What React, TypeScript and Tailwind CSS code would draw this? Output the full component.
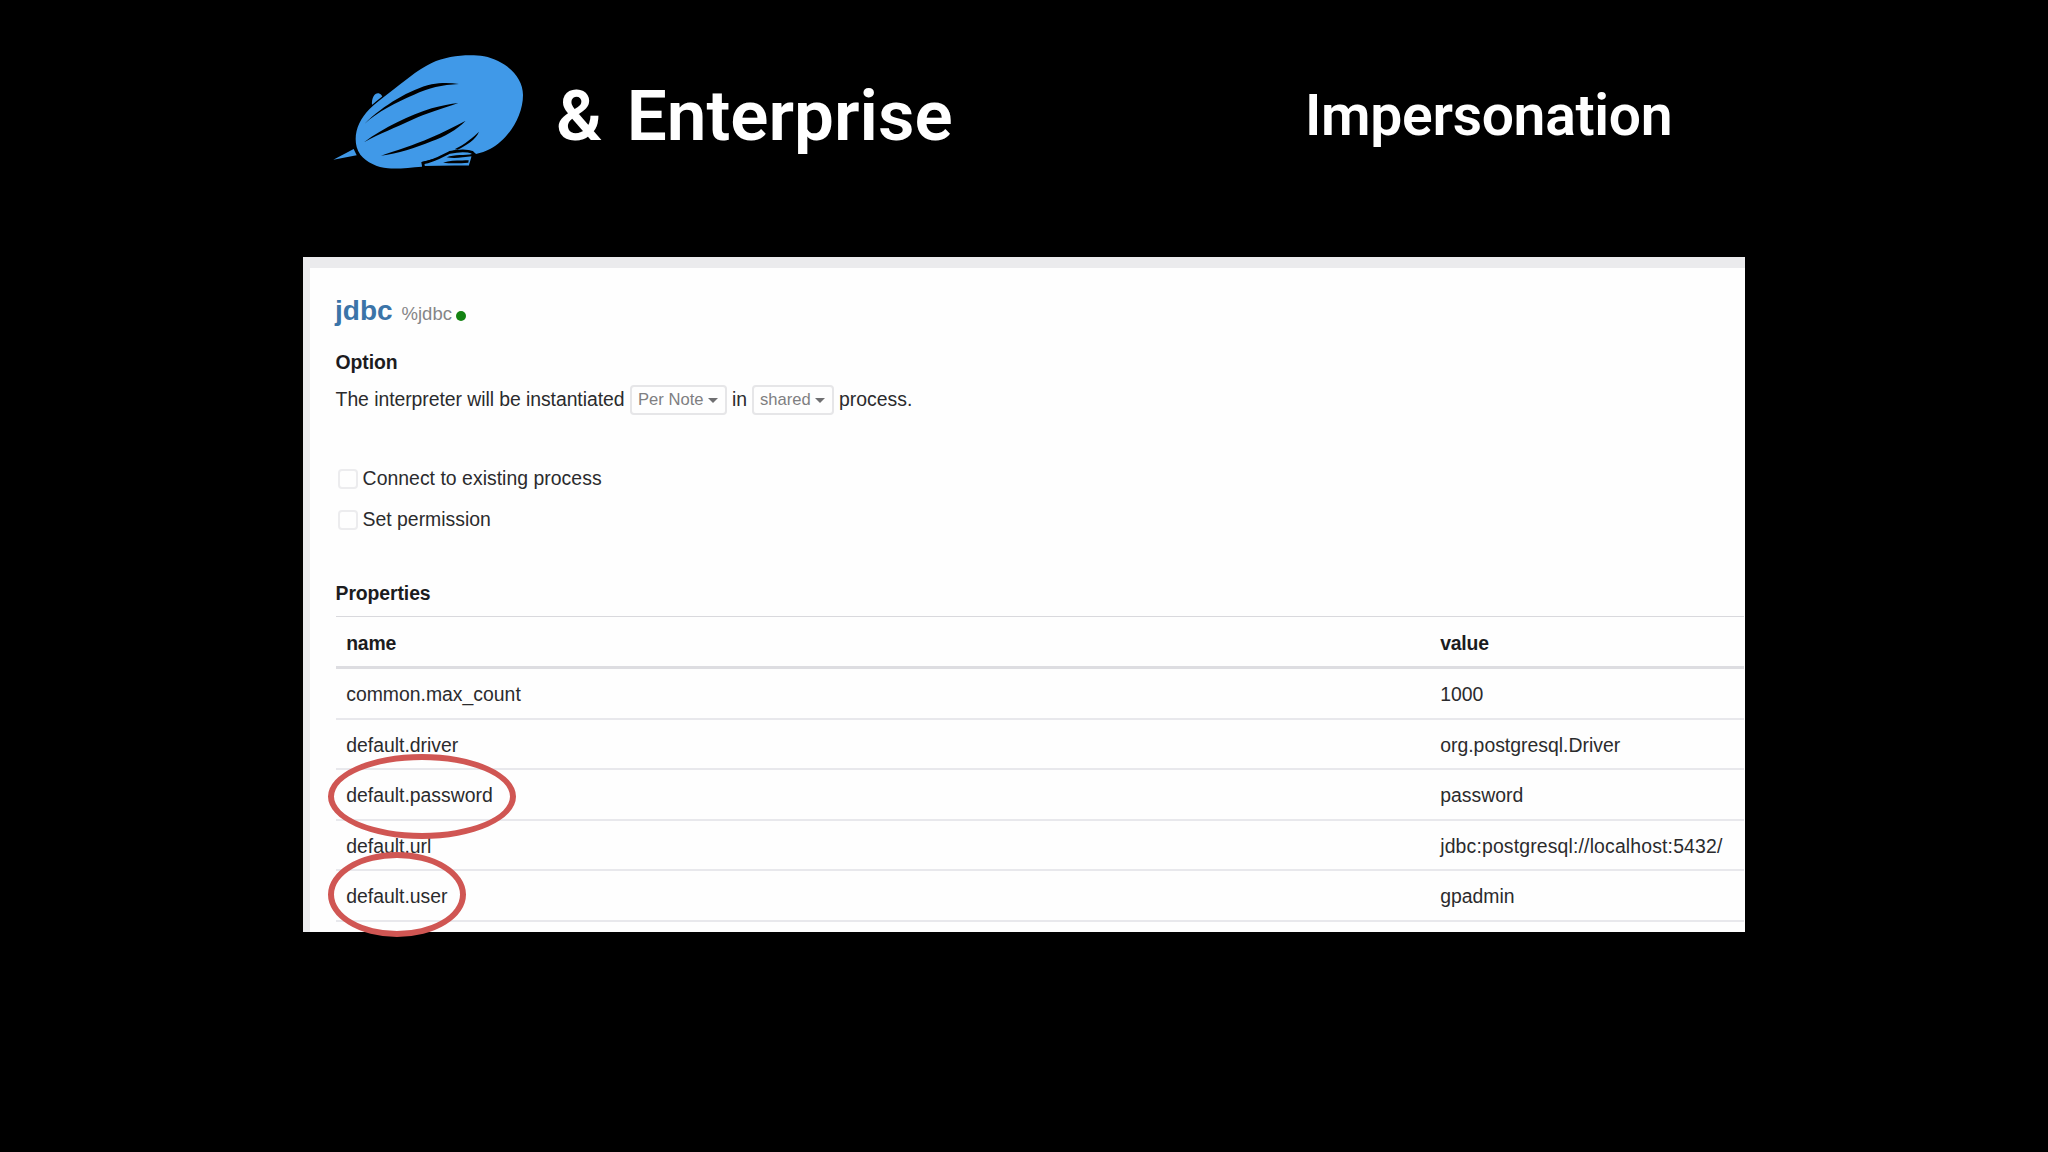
import React from 'react';
import { clsx } from 'clsx';

interface Property {
  name: string;
  value: string;
  wide?: boolean;
}

const PROPERTIES: Property[] = [
  { name: 'common.max_count', value: '1000' },
  { name: 'default.driver', value: 'org.postgresql.Driver' },
  { name: 'default.password', value: 'password' },
  { name: 'default.url', value: 'jdbc:postgresql://localhost:5432/', wide: true },
  { name: 'default.user', value: 'gpadmin' },
];

const ZeppelinLogo: React.FC = () => (
  <svg viewBox="0 0 660 420" className="w-[220px] h-[140px] shrink-0">
    {/* tail fins */}
    <path d="M156 196C154 172 165 158 176 160C183 162 187 168 188 174C176 180 167 188 156 196Z" fill="#4099e8" />
    <path d="M40 359L101 327L110 346Z" fill="#4099e8" />
    {/* hull */}
    <path
      d="M107 297C107 265 123 233 148 208C165 191 187 174 206 160C251 126 289 91 335 69C382 47 446 42 492 49C555 62 609 108 609 165C609 230 563 300 510 327C498 334 482 339 468 342C460 331 437 328 404 331C387 334 372 346 355 353L305 366L306 380C270 382 235 388 204 385C172 382 140 367 121 344C111 330 107 314 107 297Z"
      fill="#4099e8"
      stroke="#000"
      strokeWidth="8"
      paintOrder="stroke"
    />
    {/* stripes */}
    <path d="M134 251C190 196 270 148 335 133C364 127 392 128 417 132C365 134 327 144 282 164C226 188 174 214 134 251Z" />
    <path d="M132 307C190 263 272 225 335 205C365 197 391 191 415 189C363 208 319 219 275 240C226 263 181 280 132 307Z" />
    <path d="M183 347C226 332 286 314 330 294C371 277 405 258 437 242C409 271 374 289 335 304C285 324 234 342 183 347Z" />
    <path d="M404 328C435 312 461 291 477 275C467 299 441 315 413 329Z" />
    {/* gondola */}
    <path d="M309 369C342 364 365 349 389 337C413 332 439 330 457 337C463 349 453 362 450 380L311 382Z" fill="#4099e8" stroke="#000" strokeWidth="8" />
    <path d="M303 382H462V396H303Z" />
    <path d="M380 352C404 342 434 347 458 342L456 349C430 352 404 357 380 352Z" />
    <path d="M369 368C393 359 420 362 446 361L445 368C420 370 392 371 369 368Z" />
  </svg>
);

const Dropdown: React.FC<{ label: string; className: string }> = ({ label, className }) => (
  <button
    className={clsx(
      'flex items-center justify-between h-[30px] pl-[6px] pr-[7px] rounded-[4px] border-2 border-[#e6e6e8] text-[16.6px] text-[#7f7f81]',
      className
    )}
  >
    {label}
    <svg viewBox="0 0 10 5" className="w-[10px] h-[5px] fill-[#6f6f71]">
      <path d="M0 0H10L5 5Z" />
    </svg>
  </button>
);

const CheckOption: React.FC<{ label: string; className?: string }> = ({ label, className }) => (
  <label className={clsx('flex items-center h-[41px]', className)}>
    <span className="w-5 h-5 ml-[2px] mr-[5px] rounded-[4px] border-2 border-[#ececee]" />
    {label}
  </label>
);

const PropertiesTable: React.FC = () => (
  <div className="w-[1408px] border-t border-[#d9d9dd]">
    <div className="grid grid-cols-[1094px_1fr] items-center h-[52px] pt-[4px] pl-[10.6px] border-b-[3px] border-[#dddde1] font-bold text-[#1c1c1e]">
      <span className="tracking-[-0.2px]">name</span>
      <span className="tracking-[-0.2px]">value</span>
    </div>
    {PROPERTIES.map(p => (
      <div
        key={p.name}
        className="grid grid-cols-[1094px_1fr] items-center h-[50.5px] pt-[3px] pl-[10.6px] border-b-2 border-[#e8e8ec]"
      >
        <span>{p.name}</span>
        <span className={p.wide ? 'tracking-[0.16px]' : ''}>{p.value}</span>
      </div>
    ))}
  </div>
);

export default function App() {
  return (
    <div className="relative w-[2048px] h-[1152px] overflow-hidden bg-black font-['Liberation_Sans',Arial,sans-serif]">
      <header className="flex items-start h-[257px] pl-[320px] pt-[40px] text-white font-['Roboto',sans-serif] font-semibold">
        <ZeppelinLogo />
        <h1 className="w-[749px] pl-[16px] pt-[34px] text-[71px] leading-[84px] whitespace-pre [word-spacing:7px]">& Enterprise</h1>
        <h2 className="pl-[16px] pt-[42px] text-[57px] leading-[68px] tracking-[-0.3px]">Impersonation</h2>
      </header>

      <main className="w-[1442px] h-[675px] ml-[303px] pt-[11px] pl-[7px] bg-[#ebebed] overflow-hidden">
        <div className="h-full pl-[25.6px] bg-[#fefefe] text-[19.4px] text-[#2b2b2d]">
          <div className="flex items-baseline h-[62px] pt-[23px] leading-[40px]">
            <span className="-ml-[0.6px] text-[28px] font-bold text-[#3b74a8]">jdbc</span>
            <span className="ml-[9px] text-[18.5px] text-[#858587]">%jdbc</span>
            <span className="relative top-px w-[10px] h-[10px] ml-[4px] rounded-full bg-[#138313]" />
          </div>

          <h3 className="mt-[17px] leading-[30px] font-bold tracking-[-0.1px] text-[#1c1c1e]">Option</h3>
          <div className="flex items-center mt-[8px] h-[30px] whitespace-nowrap">
            <span className="w-[294.4px] tracking-[-0.06px]">The interpreter will be instantiated</span>
            <Dropdown label="Per Note" className="w-[97px]" />
            <span className="w-[26px] ml-[5px]">in</span>
            <Dropdown label="shared" className="w-[82px] -ml-[6px]" />
            <span className="ml-[5px]">process.</span>
          </div>

          <CheckOption label="Connect to existing process" className="mt-[43px] tracking-[0.03px]" />
          <CheckOption label="Set permission" />

          <h3 className="mt-[38px] mb-[8px] leading-[30px] font-bold tracking-[-0.1px] text-[#1c1c1e]">Properties</h3>
          <PropertiesTable />
        </div>
      </main>

      {/* highlight rings over the credential rows */}
      <div className="absolute left-[328px] top-[754px] w-[188px] h-[85px] rounded-[50%] border-[6px] border-[#d05653]" />
      <div className="absolute left-[328px] top-[852px] w-[138px] h-[85px] rounded-[50%] border-[6px] border-[#d05653]" />
    </div>
  );
}
